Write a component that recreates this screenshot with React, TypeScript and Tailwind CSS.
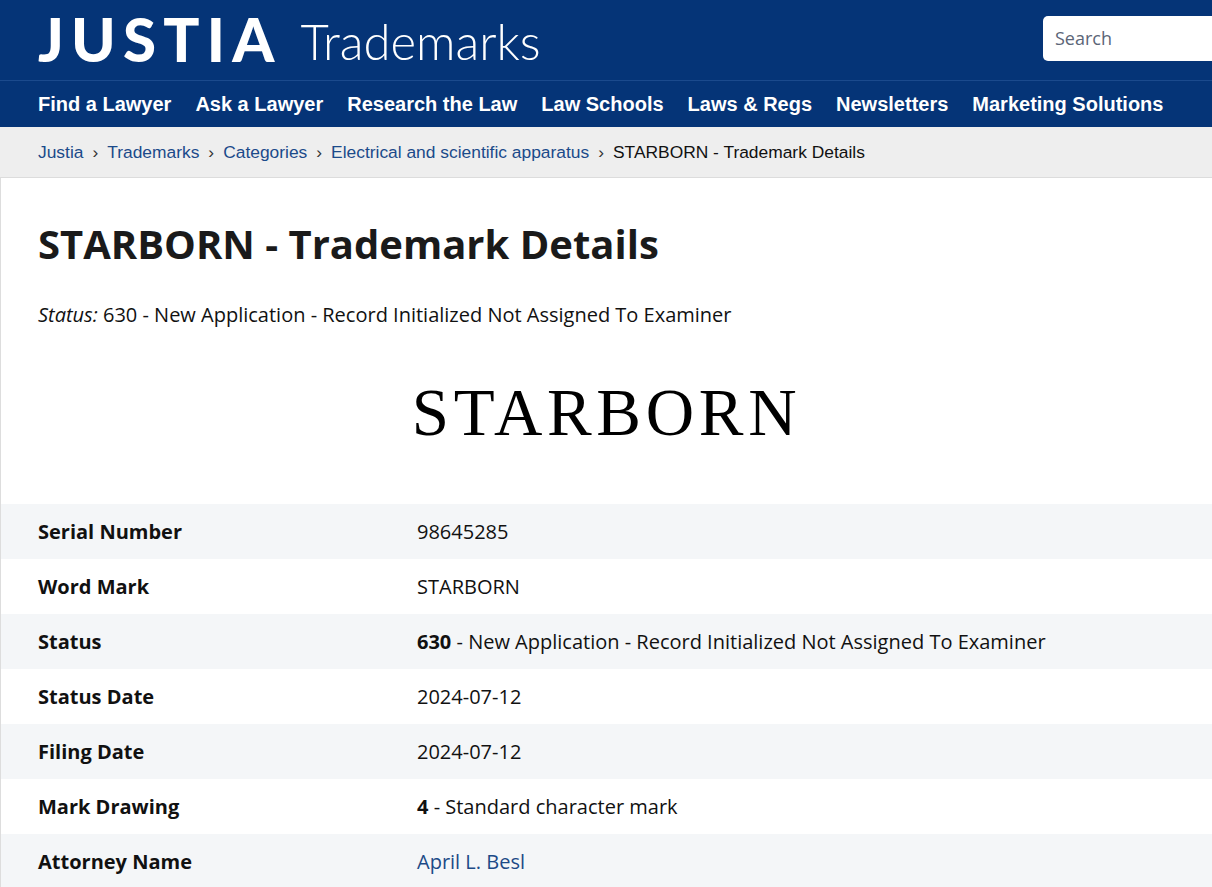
import React from "react";

const nav = ["Find a Lawyer", "Ask a Lawyer", "Research the Law", "Law Schools", "Laws & Regs", "Newsletters", "Marketing Solutions"];
const crumbs = ["Justia", "Trademarks", "Categories", "Electrical and scientific apparatus"];

type Row = { label: string; value: React.ReactNode };
const rows: Row[] = [
  { label: "Serial Number", value: "98645285" },
  { label: "Word Mark", value: "STARBORN" },
  { label: "Status", value: <><span className="font-bold">630</span> - New Application - Record Initialized Not Assigned To Examiner</> },
  { label: "Status Date", value: "2024-07-12" },
  { label: "Filing Date", value: "2024-07-12" },
  { label: "Mark Drawing", value: <><span className="font-bold">4</span> - Standard character mark</> },
  { label: "Attorney Name", value: <span className="text-[#1c4a87]">April L. Besl</span> },
];

export default function App() {
  return (
    <div className="w-[1212px] h-[887px] overflow-hidden bg-white" style={{ fontFamily: '"Open Sans", sans-serif' }}>
      <header className="bg-[#053477]">
        <div className="h-[81px] flex items-center pl-[38px] border-b border-[#1b4a8d]">
          <div className="text-white font-black text-[60px] leading-none tracking-[0.12em] mt-[-2px]" style={{ fontFamily: 'Lato, sans-serif' }}>JUSTIA</div>
          <div className="text-white font-light text-[49px] leading-none ml-[19px] mt-[2px]" style={{ fontFamily: 'Lato, sans-serif' }}>Trademarks</div>
          <div className="ml-auto w-[169px] h-[45px] bg-white rounded-l-[5px] flex items-center pl-[12px] text-[18px] text-[#5b6577] mt-[-4px]">Search</div>
        </div>
        <nav className="h-[46px] flex items-center pl-[38px] gap-[24px] text-white font-bold text-[20px]" style={{ fontFamily: '"Liberation Sans", Arial, sans-serif' }}>
          {nav.map((n) => (
            <span key={n}>{n}</span>
          ))}
        </nav>
      </header>
      <div className="h-[51px] bg-[#eeeeee] border-b border-[#dcdcdc] flex items-center pl-[38px] text-[17.4px] pt-[1px]" style={{ fontFamily: '"Liberation Sans", Arial, sans-serif' }}>
        {crumbs.map((c) => (
          <React.Fragment key={c}>
            <span className="text-[#1b4a8a]">{c}</span>
            <span className="mx-[9px] text-[#333]">›</span>
          </React.Fragment>
        ))}
        <span className="text-[#111]">STARBORN - Trademark Details</span>
      </div>
      <main className="border-l border-[#dddddd]">
        <div className="pl-[37px] pt-[42px]">
          <h1 className="text-[40px] font-bold text-[#1a1a1a] leading-[48px]">STARBORN - Trademark Details</h1>
          <p className="mt-[32px] text-[20px] text-[#111] leading-[30px]"><i>Status:</i> 630 - New Application - Record Initialized Not Assigned To Examiner</p>
        </div>
        <div className="flex justify-center pt-[49px] h-[174px]">
          <span className="text-[67px] leading-none text-black tracking-[0.07em]" style={{ fontFamily: '"Liberation Serif", "Times New Roman", serif' }}>STARBORN</span>
        </div>
        <div>
          {rows.map((r, i) => (
            <div key={r.label} className={`grid grid-cols-[416px_1fr] h-[55px] items-center text-[20px] text-[#111] ${i % 2 === 0 ? "bg-[#f4f6f8]" : "bg-white"}`}>
              <div className="pl-[37px] font-bold">{r.label}</div>
              <div>{r.value}</div>
            </div>
          ))}
        </div>
      </main>
    </div>
  );
}
